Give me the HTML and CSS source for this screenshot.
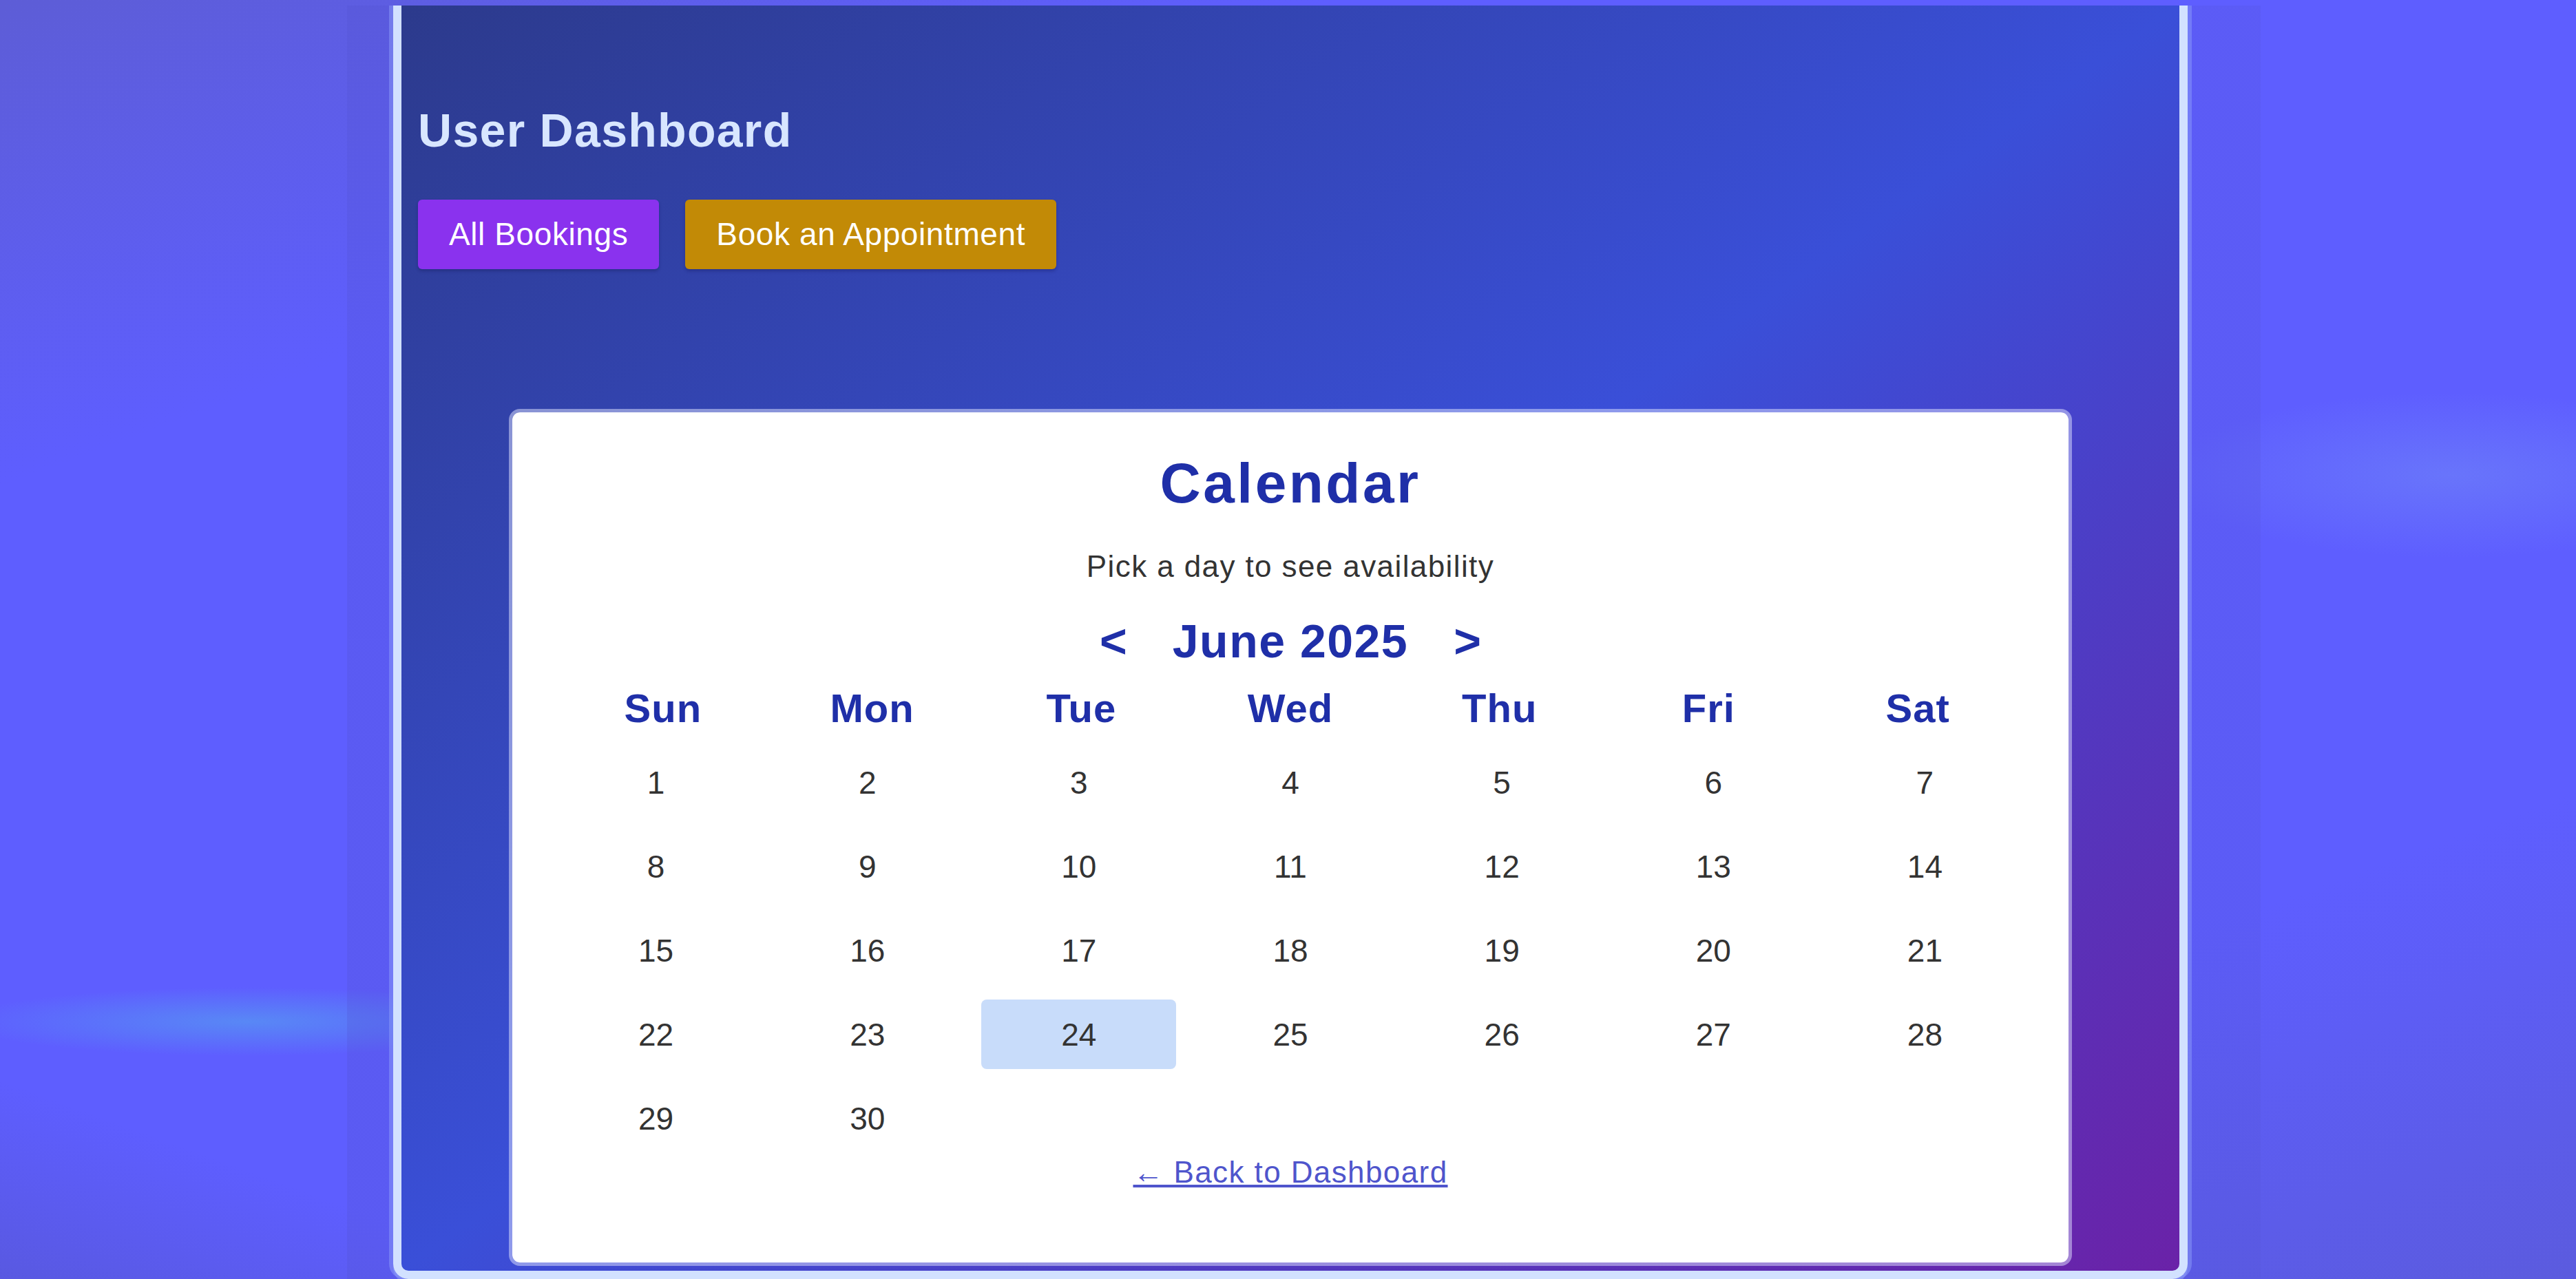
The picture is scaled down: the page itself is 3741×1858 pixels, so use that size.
FILE: index.html
```html
<!DOCTYPE html>
<html lang="en">
<head>
<meta charset="utf-8">
<title>User Dashboard</title>
<link rel="stylesheet" href="styles.css">
</head>
<body>
<div class="frame">
  <main class="panel">
    <h1 class="panel-title">User Dashboard</h1>
    <nav class="actions">
      <a class="btn btn-purple" href="#">All Bookings</a>
      <a class="btn btn-gold" href="#">Book an Appointment</a>
    </nav>
    <section class="card">
      <h2 class="card-title">Calendar</h2>
      <p class="card-sub">Pick a day to see availability</p>
      <div class="month-nav">
        <button class="nav-btn" type="button">&lt;</button>
        <span class="month-label">June 2025</span>
        <button class="nav-btn" type="button">&gt;</button>
      </div>
      <div class="weekdays">
        <div>Sun</div><div>Mon</div><div>Tue</div><div>Wed</div><div>Thu</div><div>Fri</div><div>Sat</div>
      </div>
      <div class="days">
        <div class="day">1</div><div class="day">2</div><div class="day">3</div><div class="day">4</div><div class="day">5</div><div class="day">6</div><div class="day">7</div>
        <div class="day">8</div><div class="day">9</div><div class="day">10</div><div class="day">11</div><div class="day">12</div><div class="day">13</div><div class="day">14</div>
        <div class="day">15</div><div class="day">16</div><div class="day">17</div><div class="day">18</div><div class="day">19</div><div class="day">20</div><div class="day">21</div>
        <div class="day">22</div><div class="day">23</div><div class="day selected">24</div><div class="day">25</div><div class="day">26</div><div class="day">27</div><div class="day">28</div>
        <div class="day">29</div><div class="day">30</div>
      </div>
      <p class="back"><a class="back-link" href="#">&larr; Back to Dashboard</a></p>
    </section>
  </main>
</div>
</body>
</html>
```
FILE: styles.css
```css
html, body {
  margin: 0;
  height: 1858px;
  overflow: hidden;
}

body {
  box-sizing: border-box;
  padding-top: 8px;
  font-family: "Liberation Sans", Arial, sans-serif;
  background:
    radial-gradient(ellipse 420px 50px at 360px 1484px, rgba(88, 138, 245, 0.95), rgba(88, 138, 245, 0) 100%),
    radial-gradient(ellipse 420px 120px at 3560px 690px, rgba(120, 150, 245, 0.4), rgba(120, 150, 245, 0) 100%),
    linear-gradient(20deg, rgba(84, 84, 200, 0.55) 0%, rgba(84, 84, 200, 0) 9%),
    linear-gradient(160deg, #5d5dd6 0%, #5e5eff 22%, #5e5eff 78%, #5b5bde 100%);
}

.frame {
  box-sizing: border-box;
  width: 2779px;
  height: 1850px;
  margin-left: 504px;
  padding: 0 106px 0 67px;
  background: linear-gradient(90deg, rgba(80, 80, 205, 0.25), rgba(80, 80, 205, 0.18));
}

.panel {
  box-sizing: border-box;
  height: 1850px;
  padding: 144px 24px 5px;
  border: 12px solid #d2e1ff;
  border-top: 0;
  border-radius: 0 0 22px 22px;
  box-shadow:
    -6px 0 0 0 rgba(140, 155, 250, 0.5),
    6px 0 0 0 rgba(140, 155, 250, 0.5),
    0 6px 0 0 rgba(140, 155, 250, 0.5);
  background: linear-gradient(to bottom right, #2c3a8c 0%, #3a4fd8 50%, #6a22a8 100%);
}

.panel-title {
  margin: 0;
  font-size: 68px;
  line-height: 74px;
  font-weight: bold;
  letter-spacing: 1.3px;
  color: #d8e6ff;
}

.actions {
  display: flex;
  gap: 38px;
  margin-top: 64px;
}

.btn {
  display: inline-block;
  padding: 24px 45px;
  font-size: 46px;
  line-height: 53px;
  letter-spacing: 0.6px;
  color: #fff;
  text-decoration: none;
  border-radius: 6px;
  box-shadow: 0 3px 4px rgba(20, 20, 80, 0.3);
}

.btn-purple {
  background: #8a32ee;
}

.btn-gold {
  background: #c28a06;
}

.card {
  box-sizing: border-box;
  width: 2270px;
  margin: 203px auto 0;
  padding: 58px 67px 106px;
  background: #fff;
  background-clip: padding-box;
  border: 5px solid rgba(225, 230, 255, 0.5);
  border-radius: 16px;
  text-align: center;
}

.card-title {
  margin: 0;
  font-size: 82px;
  line-height: 89px;
  font-weight: bold;
  letter-spacing: 3.5px;
  color: #1f2fa8;
}

.card-sub {
  margin: 51px 0 0;
  font-size: 44px;
  line-height: 51px;
  letter-spacing: 1.4px;
  color: #333;
}

.month-nav {
  display: flex;
  justify-content: center;
  align-items: center;
  gap: 66px;
  margin-top: 46px;
  font-size: 68px;
  line-height: 75px;
  font-weight: bold;
  color: #1f2fa8;
}

.nav-btn {
  padding: 0;
  border: 0;
  background: none;
  font: inherit;
  color: inherit;
}

.month-label {
  letter-spacing: 1.5px;
}

.weekdays {
  display: grid;
  grid-template-columns: repeat(7, 1fr);
  width: 2126px;
  margin: 26px auto 0;
  font-size: 58px;
  line-height: 67px;
  font-weight: bold;
  letter-spacing: 1px;
  color: #1f2fa8;
}

.days {
  display: grid;
  grid-template-columns: repeat(7, 1fr);
  column-gap: 24px;
  row-gap: 21px;
  width: 2126px;
  margin: 24px auto 0;
}

.day {
  display: flex;
  align-items: center;
  justify-content: center;
  height: 101px;
  font-size: 46px;
  color: #333;
  border-radius: 8px;
}

.day.selected {
  background: #c8dcfa;
}

.back {
  margin: 2px 0 0;
  font-size: 44px;
  line-height: 51px;
}

.back-link {
  letter-spacing: 1.4px;
  color: #4f55cc;
  text-decoration: underline;
}
```
